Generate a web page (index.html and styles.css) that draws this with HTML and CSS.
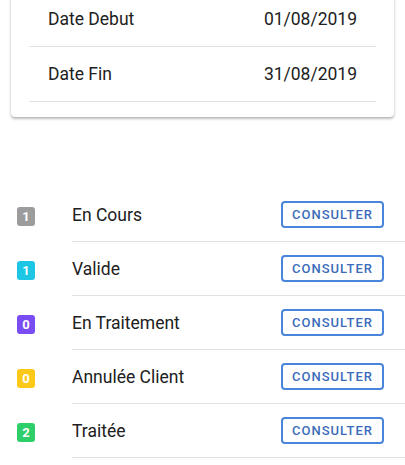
FILE: index.html
```html
<!DOCTYPE html>
<html lang="fr">
<head>
<meta charset="utf-8">
<link rel="stylesheet" href="styles.css">
</head>
<body>
<div class="card">
  <div class="card-row"><span class="label">Date Debut</span><span class="value">01/08/2019</span></div>
  <div class="card-row"><span class="label">Date Fin</span><span class="value">31/08/2019</span></div>
</div>
<ul class="list">
  <li class="item"><span class="badge gray">1</span><div class="item-body"><span class="name">En Cours</span><button class="btn">CONSULTER</button></div></li>
  <li class="item"><span class="badge cyan">1</span><div class="item-body"><span class="name">Valide</span><button class="btn">CONSULTER</button></div></li>
  <li class="item"><span class="badge purple">0</span><div class="item-body"><span class="name">En Traitement</span><button class="btn">CONSULTER</button></div></li>
  <li class="item"><span class="badge yellow">0</span><div class="item-body"><span class="name">Annulée Client</span><button class="btn">CONSULTER</button></div></li>
  <li class="item"><span class="badge green">2</span><div class="item-body"><span class="name">Traitée</span><button class="btn">CONSULTER</button></div></li>
</ul>
</body>
</html>
```
FILE: styles.css
```css
html, body {
  margin: 0;
  padding: 0;
  background: #ffffff;
  font-family: Roboto, "Noto Sans", sans-serif;
  color: #212121;
}
.card {
  margin: -8px 11px 0 11px;
  padding: 0 18px 15px 18px;
  background: #fff;
  border-radius: 0 0 4px 4px;
  box-shadow: 0 2px 3px rgba(0,0,0,0.22), 0 1px 2px rgba(0,0,0,0.12);
}
.card-row {
  height: 54px;
  display: flex;
  align-items: center;
  justify-content: space-between;
  padding: 0 19px;
  border-bottom: 1px solid #e2e2e2;
  font-size: 17.5px;
}
.list {
  list-style: none;
  margin: 71px 0 0 0;
  padding: 0;
}
.item {
  display: flex;
  align-items: stretch;
}
.badge {
  width: 18px;
  height: 19px;
  margin: 2px 37px 0 17px;
  align-self: center;
  border-radius: 3px;
  color: #fff;
  font-weight: 700;
  font-size: 13px;
  display: flex;
  align-items: center;
  justify-content: center;
}
.gray { background: #9c9c9c; }
.cyan { background: #1cc6e4; }
.purple { background: #7a4df3; }
.yellow { background: #fdc919; }
.green { background: #2ecf6b; }
.item-body {
  flex: 1;
  height: 53px;
  border-bottom: 1px solid #e2e2e2;
  display: flex;
  align-items: center;
  justify-content: space-between;
  padding-right: 21px;
  font-size: 17.5px;
}
.btn {
  width: 103px;
  height: 27px;
  border: 2px solid #4a85dc;
  border-radius: 4px;
  background: #fff;
  color: #3b6cba;
  font-family: Roboto, sans-serif;
  font-weight: 500;
  font-size: 13px;
  letter-spacing: 1px;
  padding: 0;
  display: flex;
  align-items: center;
  justify-content: center;
}
```
